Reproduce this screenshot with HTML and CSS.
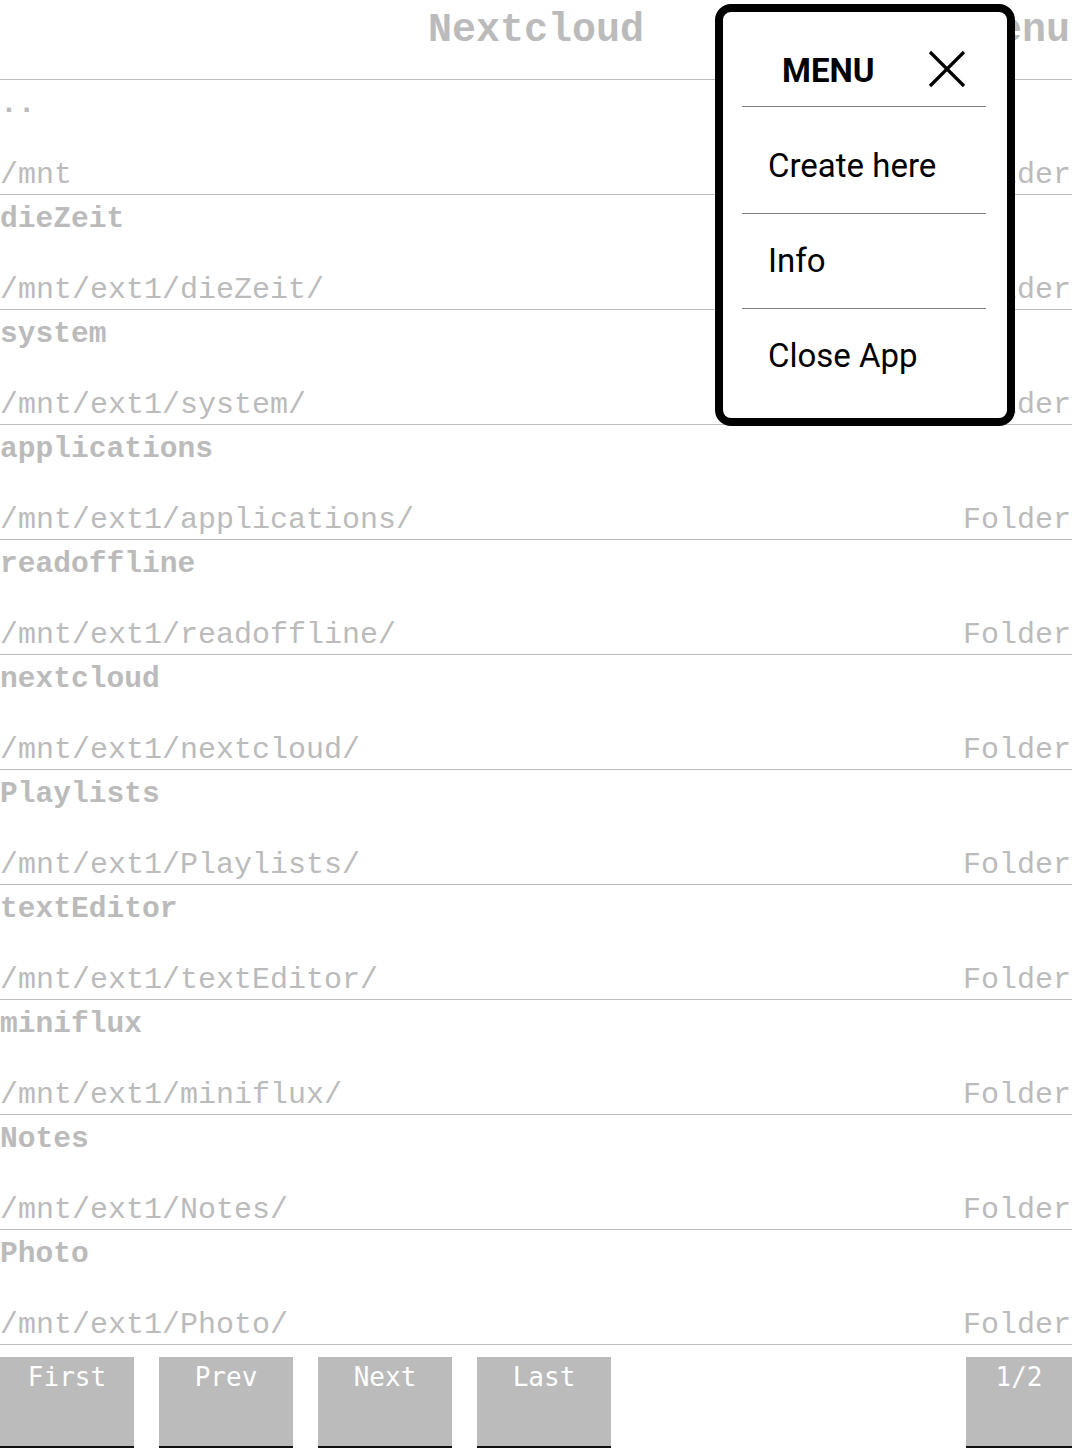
FILE: index.html
```html
<!DOCTYPE html>
<html>
<head>
<meta charset="utf-8">
<link rel="stylesheet" href="styles.css">
</head>
<body>
<div class="page">
  <header class="topbar">
    <span></span>
    <span class="title">Nextcloud</span>
    <span class="menu-label">Menu</span>
  </header>
  <ul class="list">
    <li class="row"><span class="name dots">..</span><div class="meta"><span>/mnt</span><span>Folder</span></div></li>
    <li class="row"><span class="name">dieZeit</span><div class="meta"><span>/mnt/ext1/dieZeit/</span><span>Folder</span></div></li>
    <li class="row"><span class="name">system</span><div class="meta"><span>/mnt/ext1/system/</span><span>Folder</span></div></li>
    <li class="row"><span class="name">applications</span><div class="meta"><span>/mnt/ext1/applications/</span><span>Folder</span></div></li>
    <li class="row"><span class="name">readoffline</span><div class="meta"><span>/mnt/ext1/readoffline/</span><span>Folder</span></div></li>
    <li class="row"><span class="name">nextcloud</span><div class="meta"><span>/mnt/ext1/nextcloud/</span><span>Folder</span></div></li>
    <li class="row"><span class="name">Playlists</span><div class="meta"><span>/mnt/ext1/Playlists/</span><span>Folder</span></div></li>
    <li class="row"><span class="name">textEditor</span><div class="meta"><span>/mnt/ext1/textEditor/</span><span>Folder</span></div></li>
    <li class="row"><span class="name">miniflux</span><div class="meta"><span>/mnt/ext1/miniflux/</span><span>Folder</span></div></li>
    <li class="row"><span class="name">Notes</span><div class="meta"><span>/mnt/ext1/Notes/</span><span>Folder</span></div></li>
    <li class="row"><span class="name">Photo</span><div class="meta"><span>/mnt/ext1/Photo/</span><span>Folder</span></div></li>
  </ul>
  <footer class="pager">
    <button class="btn">First</button>
    <button class="btn">Prev</button>
    <button class="btn">Next</button>
    <button class="btn">Last</button>
    <button class="btn page-count">1/2</button>
  </footer>

  <div class="popup">
    <div class="popup-head">
      <span class="popup-title">MENU</span>
      <svg class="close" width="38" height="38" viewBox="0 0 38 38"><path d="M2 2 L36 36 M36 2 L2 36" stroke="#000" stroke-width="3.2" fill="none"/></svg>
    </div>
    <div class="popup-item first">Create here</div>
    <div class="popup-item">Info</div>
    <div class="popup-item last">Close App</div>
  </div>
</div>
</body>
</html>
```

FILE: styles.css
```css
html, body {
  margin: 0;
  padding: 0;
  background: #fff;
}
.page {
  position: relative;
  width: 1072px;
  height: 1448px;
  overflow: hidden;
  font-family: "Liberation Mono", monospace;
  color: #bbbbbb;
}
.topbar {
  display: grid;
  grid-template-columns: 1fr auto 1fr;
  align-items: start;
  height: 71px;
  padding-top: 8px;
  border-bottom: 1px solid #bbbbbb;
  font-weight: bold;
  font-size: 40px;
  line-height: 45px;
}
.menu-label {
  justify-self: end;
  margin-right: 2px;
}
.list {
  list-style: none;
  margin: 0;
  padding: 0;
}
.row {
  box-sizing: border-box;
  height: 115px;
  padding: 7px 0 2px;
  border-bottom: 1px solid #bbbbbb;
  display: flex;
  flex-direction: column;
  justify-content: space-between;
  font-size: 30px;
  line-height: 34px;
}
.name {
  font-weight: bold;
  font-size: 29.6px;
}
.meta {
  display: flex;
  justify-content: space-between;
  align-items: baseline;
  padding-right: 1px;
}
.pager {
  display: flex;
  gap: 25px;
  margin-top: 12px;
}
.btn {
  box-sizing: border-box;
  width: 134px;
  height: 91px;
  margin: 0;
  padding: 5px 0 0;
  border: none;
  border-bottom: 2px solid #111;
  background: #bbbbbb;
  color: #fff;
  font-family: "DejaVu Sans Mono", monospace;
  font-size: 26px;
  line-height: 30px;
  text-align: center;
  display: flex;
  justify-content: center;
  align-items: flex-start;
}
.page-count {
  width: 106px;
  margin-left: auto;
}
.popup {
  position: absolute;
  top: 4px;
  left: 715px;
  width: 300px;
  height: 422px;
  box-sizing: border-box;
  border: 8px solid #000;
  border-radius: 16px;
  background: #fff;
  padding: 0 21px 0 19px;
  font-family: Roboto, "Noto Sans", sans-serif;
  color: #000;
}
.popup-head {
  display: flex;
  justify-content: space-between;
  align-items: center;
  padding: 39px 20px 16px 40px;
  border-bottom: 1px solid #808080;
}
.popup-title {
  font-weight: bold;
  font-size: 33px;
  line-height: 39px;
}
.close {
  display: block;
  margin-top: -4px;
}
.popup-item {
  font-size: 33px;
  line-height: 39px;
  padding: 27px 0 28px 26px;
  border-bottom: 1px solid #808080;
}
.popup-item.first {
  padding-top: 39px;
  padding-bottom: 28px;
}
.popup-item.last {
  border-bottom: none;
}
```
